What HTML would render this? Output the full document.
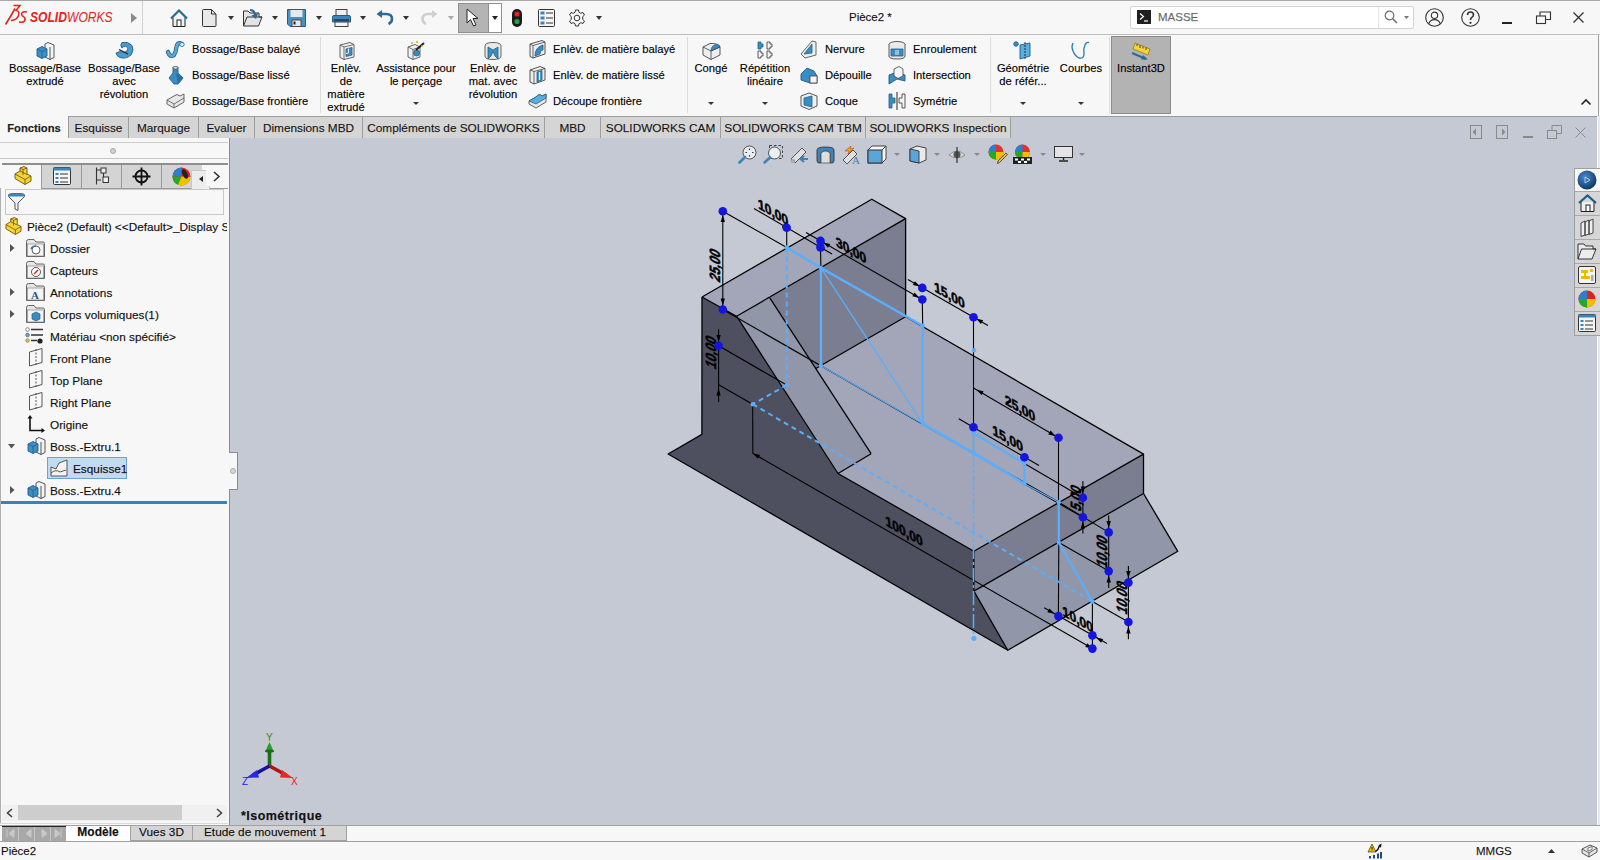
<!DOCTYPE html>
<html><head><meta charset="utf-8">
<style>
*{box-sizing:border-box}
body{margin:0;width:1600px;height:860px;position:relative;overflow:hidden;background:#f7f7f7;font-family:"Liberation Sans",sans-serif;font-size:11.2px;color:#000;-webkit-text-stroke:0.25px rgba(0,0,0,0.5)}
.a{position:absolute}
.t{position:absolute;white-space:nowrap;line-height:13px}
.c{text-align:center}
svg{position:absolute;overflow:visible}
</style></head><body>

<!-- ===== VIEWPORT ===== -->
<div class="a" style="left:230px;top:116px;width:1367px;height:709px;background:#c5c9d3"></div>
<div class="a" style="left:1010px;top:116px;width:587px;height:1px;background:#9a9a9a"></div>

<!-- ===== TITLE BAR ===== -->
<div class="a" style="left:0;top:0;width:1600px;height:35px;background:#f7f7f7;border-top:1px solid #a9a9a9;border-bottom:1px solid #bdbdbd"></div>
<div class="a" style="left:142px;top:1px;width:1px;height:33px;background:#d0d0d0"></div>

<!-- logo -->
<svg style="left:4px;top:4px" width="24" height="22" viewBox="0 0 24 22">
<path d="M9.5 1.5 H16 L12 6.5 Q16 7 14.5 11.5 Q13 16 7 16.5" fill="none" stroke="#e2231a" stroke-width="1.5"/>
<path d="M11 4.5 Q7 12 1.5 20.5" fill="none" stroke="#e2231a" stroke-width="1.6"/>
<path d="M23 8 Q18 7 17.5 10 Q17.5 12 20 13 Q22 14.5 20.5 17 Q19 19 15 18" fill="none" stroke="#e2231a" stroke-width="1.5"/>
</svg>
<div class="t" style="left:30px;top:9px;font-size:13.3px;line-height:16px;color:#e2231a;font-style:italic;transform:scale(0.91,1.08);transform-origin:0 0;-webkit-text-stroke:0"><b>SOLID</b><span style="font-weight:normal">WORKS</span></div>
<svg style="left:131px;top:13px" width="6" height="10"><path d="M0 0 L6 5 L0 10Z" fill="#8a8a8a"/></svg>

<!-- home -->
<svg style="left:170px;top:9px" width="18" height="18" viewBox="0 0 18 18">
<path d="M3 8.5 V17.5 H15 V8.5" fill="#f0f0f0" stroke="#222" stroke-width="1"/>
<path d="M1 9.5 L9 1.5 L17 9.5" fill="none" stroke="#2a6a96" stroke-width="2.2"/>
<rect x="7" y="11" width="4" height="6.5" fill="#fff" stroke="#222" stroke-width="1"/>
</svg>
<!-- new -->
<svg style="left:202px;top:9px" width="15" height="18" viewBox="0 0 15 18">
<path d="M0.5 1.5 Q0.5 0.5 1.5 0.5 H9.5 L14 5 V16.5 Q14 17.5 13 17.5 H1.5 Q0.5 17.5 0.5 16.5Z" fill="#e8e8e8" stroke="#333" stroke-width="1"/>
<path d="M9.5 0.5 V5 H14" fill="none" stroke="#333" stroke-width="1"/>
</svg>
<svg style="left:228px;top:16px" width="6" height="4"><path d="M0 0H6L3 4Z" fill="#333"/></svg>
<!-- open -->
<svg style="left:243px;top:8px" width="20" height="19" viewBox="0 0 20 19">
<path d="M0.5 3 H5 L7 5 H16 V9 H19 L15.5 18 H0.5Z" fill="#e4e4e4" stroke="#333" stroke-width="1"/>
<path d="M0.5 18 L4 9 H19" fill="none" stroke="#333" stroke-width="1"/>
<path d="M7 1 Q12 1 13 6 L15.5 4.5 L13 11 L8.5 7.5 L11 6.5 Q10 3 7 3Z" fill="#2a6a96"/>
</svg>
<svg style="left:272px;top:16px" width="6" height="4"><path d="M0 0H6L3 4Z" fill="#333"/></svg>
<!-- save -->
<svg style="left:287px;top:9px" width="19" height="18" viewBox="0 0 19 18">
<path d="M0.5 0.5 H18.5 V17.5 H3 L0.5 15Z" fill="#4a90c0" stroke="#2a5a80" stroke-width="1"/>
<rect x="3.5" y="1" width="12" height="7" fill="#e8e8e8"/>
<rect x="5" y="11" width="9" height="6.5" fill="#e8e8e8" stroke="#333" stroke-width="0.8"/>
<rect x="6.5" y="12.5" width="2" height="3" fill="#222"/>
</svg>
<svg style="left:316px;top:16px" width="6" height="4"><path d="M0 0H6L3 4Z" fill="#333"/></svg>
<!-- print -->
<svg style="left:332px;top:9px" width="19" height="18" viewBox="0 0 19 18">
<rect x="4" y="0.5" width="11" height="7" fill="#eee" stroke="#444" stroke-width="1"/>
<path d="M0.5 8 Q0.5 6.5 2 6.5 H17 Q18.5 6.5 18.5 8 V13 H0.5Z" fill="#3d85b8" stroke="#245a85" stroke-width="1"/>
<rect x="2" y="10" width="15" height="2" fill="#1d4a6e"/>
<rect x="3" y="13" width="13" height="4.5" fill="#f2f2f2" stroke="#444" stroke-width="1"/>
</svg>
<svg style="left:360px;top:16px" width="6" height="4"><path d="M0 0H6L3 4Z" fill="#333"/></svg>
<!-- undo -->
<svg style="left:376px;top:10px" width="18" height="15" viewBox="0 0 18 15">
<path d="M3 4 H10 Q16 4 16 9 Q16 12.5 12.5 14" fill="none" stroke="#2a6a96" stroke-width="2.6"/>
<path d="M0.5 4 L6 0 V8Z" fill="#2a6a96"/>
</svg>
<svg style="left:403px;top:16px" width="6" height="4"><path d="M0 0H6L3 4Z" fill="#333"/></svg>
<!-- redo -->
<svg style="left:421px;top:10px" width="17" height="15" viewBox="0 0 17 15">
<path d="M14 4 H7 Q1.5 4 1.5 9 Q1.5 12.5 5 14" fill="none" stroke="#cfcfcf" stroke-width="2.6"/>
<path d="M16.5 4 L11 0 V8Z" fill="#cfcfcf"/>
</svg>
<svg style="left:448px;top:16px" width="6" height="4"><path d="M0 0H6L3 4Z" fill="#aaa"/></svg>
<!-- select -->
<div class="a" style="left:458px;top:3px;width:44px;height:30px;background:#fff;border:1px solid #8f8f8f"></div>
<div class="a" style="left:458px;top:3px;width:31px;height:30px;background:#b4b4b4;border:1px solid #8f8f8f"></div>
<svg style="left:466px;top:8px" width="14" height="19" viewBox="0 0 14 19">
<path d="M1 1 V15 L4.5 11.5 L7.5 18 L10 17 L7 10.5 H12Z" fill="#fff" stroke="#222" stroke-width="1"/>
</svg>
<svg style="left:492px;top:16px" width="6" height="4"><path d="M0 0H6L3 4Z" fill="#222"/></svg>
<!-- traffic -->
<svg style="left:512px;top:9px" width="10" height="18" viewBox="0 0 10 18">
<rect x="0" y="0" width="10" height="18" rx="5" fill="#1a1a1a"/>
<circle cx="5" cy="5" r="2.6" fill="#e02020"/><circle cx="5" cy="12.5" r="2.6" fill="#20a040"/>
</svg>
<!-- list -->
<svg style="left:538px;top:9px" width="17" height="18" viewBox="0 0 17 18">
<rect x="0.5" y="0.5" width="16" height="17" rx="1" fill="#f5f5f5" stroke="#333" stroke-width="1"/>
<rect x="2.5" y="2.5" width="4" height="3" fill="#3d85b8"/><rect x="2.5" y="7.5" width="4" height="3" fill="#3d85b8"/><rect x="2.5" y="12.5" width="4" height="3" fill="#3d85b8"/>
<path d="M8 4H15M8 9H15M8 14H15" stroke="#333" stroke-width="1"/>
</svg>
<!-- gear -->
<svg style="left:568px;top:9px" width="18" height="18" viewBox="0 0 18 18">
<path d="M7.5 1 H10.5 L11 3.3 L12.8 4.3 L15 3.5 L16.5 6 L14.7 7.6 V10.4 L16.5 12 L15 14.5 L12.8 13.7 L11 14.7 L10.5 17 H7.5 L7 14.7 L5.2 13.7 L3 14.5 L1.5 12 L3.3 10.4 V7.6 L1.5 6 L3 3.5 L5.2 4.3 L7 3.3Z" fill="none" stroke="#333" stroke-width="1"/>
<circle cx="9" cy="9" r="2.8" fill="none" stroke="#333" stroke-width="1"/>
</svg>
<svg style="left:596px;top:16px" width="6" height="4"><path d="M0 0H6L3 4Z" fill="#333"/></svg>

<!-- search -->
<div class="a" style="left:1130px;top:6px;width:284px;height:23px;background:#fff;border:1px solid #d2d2d2;border-radius:2px"></div>
<div class="a" style="left:1378px;top:7px;width:1px;height:21px;background:#e6e6e6"></div>
<svg style="left:1137px;top:10px" width="14" height="14"><rect width="14" height="14" fill="#202020"/><path d="M3 3.5 L6.5 6.5 L3 9.5" fill="none" stroke="#fff" stroke-width="1.2"/><path d="M7 11 H11" stroke="#fff" stroke-width="1.2"/></svg>
<div class="t" style="left:1158px;top:11px;font-size:11.5px;color:#7a7a7a">MASSE</div>
<svg style="left:1384px;top:10px" width="14" height="14" viewBox="0 0 14 14"><circle cx="5.5" cy="5.5" r="4.3" fill="none" stroke="#6a6a6a" stroke-width="1.2"/><path d="M8.7 8.7 L13 13" stroke="#6a6a6a" stroke-width="1.5"/></svg>
<svg style="left:1404px;top:16px" width="5" height="3"><path d="M0 0H5L2.5 3Z" fill="#777"/></svg>
<!-- user / help -->
<svg style="left:1425px;top:8px" width="19" height="19" viewBox="0 0 19 19"><circle cx="9.5" cy="9.5" r="8.8" fill="none" stroke="#333" stroke-width="1.1"/><circle cx="9.5" cy="7.3" r="3.2" fill="none" stroke="#333" stroke-width="1.1"/><path d="M3.6 16 Q5 11.6 9.5 11.6 Q14 11.6 15.4 16" fill="none" stroke="#333" stroke-width="1.1"/></svg>
<svg style="left:1461px;top:8px" width="19" height="19" viewBox="0 0 19 19"><circle cx="9.5" cy="9.5" r="8.8" fill="none" stroke="#333" stroke-width="1.1"/><path d="M6.5 7 Q6.5 4 9.5 4 Q12.5 4 12.5 6.8 Q12.5 8.5 10.5 9.6 Q9.5 10.3 9.5 12" fill="none" stroke="#333" stroke-width="1.6"/><circle cx="9.5" cy="14.8" r="1.1" fill="#333"/></svg>
<div class="a" style="left:1502px;top:22px;width:10px;height:2px;background:#222"></div>
<svg style="left:1536px;top:11px" width="15" height="13" viewBox="0 0 15 13"><rect x="0.5" y="5" width="9" height="7.5" fill="none" stroke="#333" stroke-width="1.1"/><path d="M4 5 V1 H14.5 V8.5 H9.5" fill="none" stroke="#333" stroke-width="1.1"/></svg>
<svg style="left:1573px;top:12px" width="11" height="11" viewBox="0 0 11 11"><path d="M0.5 0.5 L10.5 10.5 M10.5 0.5 L0.5 10.5" stroke="#333" stroke-width="1.3"/></svg>

<div class="t" style="left:849px;top:11px;font-size:11.5px;color:#111">Pièce2 *</div>

<!-- ===== RIBBON ===== -->
<div class="a" style="left:0;top:35px;width:1599px;height:81px;background:#f7f7f7;border-right:1px solid #a0a0a0"></div>
<div class="a" style="left:320px;top:37px;width:1px;height:76px;background:#dcdcdc"></div>
<div class="a" style="left:687px;top:37px;width:1px;height:76px;background:#dcdcdc"></div>
<div class="a" style="left:990px;top:37px;width:1px;height:76px;background:#dcdcdc"></div>
<div class="a" style="left:1109px;top:37px;width:1px;height:76px;background:#dcdcdc"></div>
<div class="a" style="left:1111px;top:36px;width:60px;height:78px;background:#b3b3b3;border:1px solid #8a8a8a"></div>

<svg style="left:36px;top:42px" width="19" height="18" viewBox="0 0 19 18">
<path d="M9 2 L12 0.5 L18 3 V15.5 L14 17.5 L9 15Z" fill="#f4f4f4" stroke="#444" stroke-width="0.9"/>
<path d="M14 5 V17.5" stroke="#444" stroke-width="0.9"/>
<path d="M1 7 L6 4.5 L11 7 V14 L6 16.5 L1 14Z" fill="#3d8fc4" stroke="#1f5f8a" stroke-width="0.9"/>
<path d="M1 7 L6 9.5 L11 7 M6 9.5 V16.5" fill="none" stroke="#1f5f8a" stroke-width="0.8"/>
</svg><div class="t c" style="left:-15px;width:120px;top:62px">Bossage/Base</div>
<div class="t c" style="left:-15px;width:120px;top:75px">extrudé</div>
<svg style="left:115px;top:41px" width="19" height="19" viewBox="0 0 19 19">
<path d="M7 1.5 Q13 0 17 4.5 Q19.5 9 16 14 Q11 18.5 5 16.5 Q1.5 15 1 12 L5 10.5 Q9 13 12 10 Q14 7 11 5 Q8 5.5 7 7 Q4.5 4 7 1.5Z" fill="#4a9ccf" stroke="#1f5f8a" stroke-width="0.9"/>
<path d="M4 8.5 L13 13" stroke="#222" stroke-width="1.3"/>
</svg><div class="t c" style="left:64px;width:120px;top:62px">Bossage/Base</div>
<div class="t c" style="left:64px;width:120px;top:75px">avec</div>
<div class="t c" style="left:64px;width:120px;top:88px">révolution</div>
<svg style="left:166px;top:40px" width="19" height="19" viewBox="0 0 19 19">
<path d="M2 12 Q4 18 8 15 Q10 12 10.5 7 Q11 3 14 3 L16 4" fill="none" stroke="#1f5f8a" stroke-width="4.2" stroke-linecap="round"/>
<path d="M2 12 Q4 18 8 15 Q10 12 10.5 7 Q11 3 14 3 L16 4" fill="none" stroke="#5aa9d8" stroke-width="2.6" stroke-linecap="round"/>
<ellipse cx="16" cy="4.5" rx="2.2" ry="2" fill="#dff" stroke="#1f5f8a" stroke-width="0.8"/>
</svg><div class="t" style="left:192px;top:43px">Bossage/Base balayé</div>
<svg style="left:168px;top:66px" width="16" height="19" viewBox="0 0 16 19">
<path d="M5 1 H10 V7 L15 12 L10 18 H6 L1 12 L5 7Z" fill="#3a8dc2" stroke="#1f5f8a" stroke-width="0.9"/>
<ellipse cx="7.5" cy="1.8" rx="2.6" ry="1.2" fill="#eee" stroke="#444" stroke-width="0.7"/>
<path d="M8 7 L15 12 L10 18Z" fill="#2a6fa0"/>
</svg><div class="t" style="left:192px;top:69px">Bossage/Base lissé</div>
<svg style="left:166px;top:92px" width="19" height="17" viewBox="0 0 19 17">
<path d="M1 8 L8 4 Q11 1 14 4 L18 2 V10 L8 16 L1 12Z" fill="#e8e8e8" stroke="#555" stroke-width="0.9"/>
<path d="M1 8 L8 12 L18 6 M8 12 V16" fill="none" stroke="#555" stroke-width="0.8"/>
</svg><div class="t" style="left:192px;top:95px">Bossage/Base frontière</div>
<svg style="left:339px;top:42px" width="16" height="18" viewBox="0 0 16 18">
<path d="M1 3 L11 0.5 L15 2.5 V15 L5 17.5 L1 15.5Z" fill="#efefef" stroke="#555" stroke-width="0.9"/>
<path d="M5 5 L15 2.5 M5 5 V17.5 M1 3 L5 5" fill="none" stroke="#555" stroke-width="0.8"/>
<path d="M7 7 L13 5.5 V13 L7 14.5Z" fill="#3a8dc2" stroke="#1f5f8a" stroke-width="0.8"/>
<path d="M9.5 6.5 V11 L7 11.5" fill="none" stroke="#eee" stroke-width="1"/>
</svg><div class="t c" style="left:286px;width:120px;top:62px">Enlèv.</div>
<div class="t c" style="left:286px;width:120px;top:75px">de</div>
<div class="t c" style="left:286px;width:120px;top:88px">matière</div>
<div class="t c" style="left:286px;width:120px;top:101px">extrudé</div>
<svg style="left:407px;top:41px" width="18" height="19" viewBox="0 0 18 19">
<path d="M1 6 L8 3.5 L13 6 V16 L6 18.5 L1 16Z" fill="#efefef" stroke="#555" stroke-width="0.9"/>
<path d="M1 6 L6 8.5 L13 6 M6 8.5 V18.5" fill="none" stroke="#555" stroke-width="0.8"/>
<circle cx="9.5" cy="12" r="3" fill="#3a8dc2" stroke="#1f5f8a" stroke-width="0.8"/>
<path d="M9 9 L17 2" stroke="#222" stroke-width="2"/>
<circle cx="5" cy="2" r="1" fill="#e8a020"/><circle cx="10" cy="1" r="1.2" fill="#f0c020"/><circle cx="15" cy="5" r="0.9" fill="#e8a020"/>
</svg><div class="t c" style="left:356px;width:120px;top:62px">Assistance pour</div>
<div class="t c" style="left:356px;width:120px;top:75px">le perçage</div>
<svg style="left:413px;top:102px" width="6" height="3"><path d="M0 0H6L3 3Z" fill="#333"/></svg>
<svg style="left:484px;top:42px" width="18" height="18" viewBox="0 0 18 18">
<path d="M1 4 Q1 0.5 9 0.5 Q17 0.5 17 4 V14 Q17 17.5 9 17.5 Q1 17.5 1 14Z" fill="#e8e8e8" stroke="#555" stroke-width="0.9"/>
<path d="M4 5 L9 8 L14 5 V17 L11 14 L9 9.5 L7 14 L4 17Z" fill="#3a8dc2" stroke="#1f5f8a" stroke-width="0.8"/>
</svg><div class="t c" style="left:433px;width:120px;top:62px">Enlèv. de</div>
<div class="t c" style="left:433px;width:120px;top:75px">mat. avec</div>
<div class="t c" style="left:433px;width:120px;top:88px">révolution</div>
<svg style="left:529px;top:40px" width="17" height="19" viewBox="0 0 17 19">
<path d="M1 4 L13 0.5 L16 2 V14 L4 18 L1 16.5Z" fill="#eee" stroke="#444" stroke-width="0.9"/>
<path d="M4 5.5 L16 2 M4 5.5 V18 M1 4 L4 5.5" fill="none" stroke="#444" stroke-width="0.8"/>
<path d="M6 16 Q6 7 14 5 V10 Q11 10 11 14Z" fill="#3a8dc2" stroke="#1f5f8a" stroke-width="0.8"/>
</svg><div class="t" style="left:553px;top:43px">Enlèv. de matière balayé</div>
<svg style="left:529px;top:66px" width="17" height="19" viewBox="0 0 17 19">
<path d="M1 4 L11 0.5 L16 2.5 V14 L5 18 L1 16Z" fill="#eee" stroke="#444" stroke-width="0.9"/>
<path d="M5 5.5 L16 2.5 M5 5.5 V18 M1 4 L5 5.5" fill="none" stroke="#444" stroke-width="0.8"/>
<path d="M8 16 V6 L13 4.5 V14Z" fill="#3a8dc2" stroke="#1f5f8a" stroke-width="0.8"/>
<path d="M10.5 6 V14" stroke="#eee" stroke-width="1.2"/>
</svg><div class="t" style="left:553px;top:69px">Enlèv. de matière lissé</div>
<svg style="left:528px;top:92px" width="19" height="17" viewBox="0 0 19 17">
<path d="M1 9 L8 5 Q11 1 14 4 L18 2 V10 L8 16 L1 12Z" fill="#e8e8e8" stroke="#555" stroke-width="0.9"/>
<path d="M1 9 L8 5 Q11 1 14 4 L18 2 L18 6 L8 12 L1 9Z" fill="#5aaee0" stroke="#1f5f8a" stroke-width="0.8"/>
</svg><div class="t" style="left:553px;top:95px">Découpe frontière</div>
<svg style="left:702px;top:42px" width="19" height="18" viewBox="0 0 19 18">
<path d="M1 5 L8 1.5 Q16 1 18 5 V13 L9 17.5 L1 13Z" fill="#eee" stroke="#444" stroke-width="0.9"/>
<path d="M9 9 Q9 3 15 2.5 Q18 3 18 5 L9 9Z" fill="#3a8dc2" stroke="#1f5f8a" stroke-width="0.8"/>
<path d="M1 5 L9 9 V17.5 M9 9 L18 5" fill="none" stroke="#444" stroke-width="0.8"/>
</svg><div class="t c" style="left:651px;width:120px;top:62px">Congé</div>
<svg style="left:708px;top:102px" width="6" height="3"><path d="M0 0H6L3 3Z" fill="#333"/></svg>
<svg style="left:757px;top:41px" width="17" height="18" viewBox="0 0 17 18">
<path d="M1 1 H4 V3 H6 V6 H4 V8 H1Z" fill="#3a8dc2" stroke="#1f5f8a" stroke-width="0.8"/>
<path d="M10 1 H13 V3 H15 V6 H13 V8 H10Z" fill="#f4f4f4" stroke="#333" stroke-width="0.8"/>
<path d="M1 10 H4 V12 H6 V15 H4 V17 H1Z" fill="#f4f4f4" stroke="#333" stroke-width="0.8"/>
<path d="M10 10 H13 V12 H15 V15 H13 V17 H10Z" fill="#f4f4f4" stroke="#333" stroke-width="0.8"/>
</svg><div class="t c" style="left:705px;width:120px;top:62px">Répétition</div>
<div class="t c" style="left:705px;width:120px;top:75px">linéaire</div>
<svg style="left:762px;top:102px" width="6" height="3"><path d="M0 0H6L3 3Z" fill="#333"/></svg>
<svg style="left:800px;top:40px" width="18" height="19" viewBox="0 0 18 19">
<path d="M1 14 L12 1 L16 2 V15 L5 18Z" fill="#eee" stroke="#555" stroke-width="0.9"/>
<path d="M4 14 L12 4 V13 Z" fill="#3a8dc2" stroke="#1f5f8a" stroke-width="0.8"/>
</svg><div class="t" style="left:825px;top:43px">Nervure</div>
<svg style="left:800px;top:66px" width="18" height="18" viewBox="0 0 18 18">
<path d="M1 8 L7 2 L14 5 L17 10 V17 L10 17 L1 14Z" fill="#3a8dc2" stroke="#1f5f8a" stroke-width="0.9"/>
<rect x="10" y="10" width="7" height="7" fill="#f4f4f4" stroke="#444" stroke-width="0.8"/>
</svg><div class="t" style="left:825px;top:69px">Dépouille</div>
<svg style="left:800px;top:92px" width="18" height="18" viewBox="0 0 18 18">
<path d="M1 4 L9 1 L17 4 V14 L9 17.5 L1 14Z" fill="#f0f0f0" stroke="#444" stroke-width="0.9"/>
<path d="M4 6 L12 4 V15 L4 13Z" fill="#3a8dc2" stroke="#1f5f8a" stroke-width="0.8"/>
</svg><div class="t" style="left:825px;top:95px">Coque</div>
<svg style="left:888px;top:41px" width="18" height="19" viewBox="0 0 18 19">
<ellipse cx="9" cy="3.5" rx="8" ry="3" fill="#eee" stroke="#444" stroke-width="0.9"/>
<path d="M1 3.5 V15 Q1 18 9 18 Q17 18 17 15 V3.5" fill="#e8e8e8" stroke="#444" stroke-width="0.9"/>
<path d="M3 8 H15 V15 H3Z" fill="#3a8dc2" stroke="#1f5f8a" stroke-width="0.8"/>
<path d="M8 9 V14 M10 9 V14" stroke="#eee" stroke-width="1"/>
</svg><div class="t" style="left:913px;top:43px">Enroulement</div>
<svg style="left:888px;top:66px" width="18" height="19" viewBox="0 0 18 19">
<path d="M1 9 L9 6 L17 9 V15 L9 13 L1 18Z" fill="#3a8dc2" stroke="#1f5f8a" stroke-width="0.9"/>
<path d="M6 3 L11 0.5 L15 3 V10 L10 12.5 L6 10Z" fill="#f4f4f4" stroke="#444" stroke-width="0.8"/>
</svg><div class="t" style="left:913px;top:69px">Intersection</div>
<svg style="left:888px;top:92px" width="18" height="18" viewBox="0 0 18 18">
<path d="M1 2 H4 V6 H7 V11 H4 V16 H1Z" fill="#3a8dc2" stroke="#1f5f8a" stroke-width="0.8"/>
<path d="M17 2 H14 V6 H11 V11 H14 V16 H17Z" fill="#f4f4f4" stroke="#333" stroke-width="0.8"/>
<path d="M9 0 V18" stroke="#222" stroke-width="1"/>
</svg><div class="t" style="left:913px;top:95px">Symétrie</div>
<svg style="left:1013px;top:41px" width="18" height="19" viewBox="0 0 18 19">
<circle cx="3" cy="3" r="2.3" fill="#3a8dc2" stroke="#1f5f8a" stroke-width="0.8"/>
<path d="M7 4 L17 2 V15 L7 18Z" fill="#5aaee0" stroke="#1f5f8a" stroke-width="0.9"/>
<path d="M12 1 V19" stroke="#222" stroke-width="0.9" stroke-dasharray="2 1"/>
</svg><div class="t c" style="left:963px;width:120px;top:62px">Géométrie</div>
<div class="t c" style="left:963px;width:120px;top:75px">de référ...</div>
<svg style="left:1020px;top:102px" width="6" height="3"><path d="M0 0H6L3 3Z" fill="#333"/></svg>
<svg style="left:1071px;top:41px" width="19" height="19" viewBox="0 0 19 19">
<path d="M2 2 Q0 6 2 10 Q4 15 8 17 Q13 18 13 13 Q12 8 14 4 Q15 1 18 1.5" fill="none" stroke="#2a7ab0" stroke-width="1.3"/>
</svg><div class="t c" style="left:1021px;width:120px;top:62px">Courbes</div>
<svg style="left:1078px;top:102px" width="6" height="3"><path d="M0 0H6L3 3Z" fill="#333"/></svg>
<svg style="left:1131px;top:41px" width="20" height="19" viewBox="0 0 20 19">
<path d="M4 2 L19 8 L17 14 L2 8Z" fill="#f3d43a" stroke="#9a7a10" stroke-width="0.8"/>
<path d="M6 3 V5 M9 4 V7 M12 5.5 V7.5 M15 6.5 V9" stroke="#222" stroke-width="0.8"/>
<path d="M1 12 L15 18" stroke="#2a6a96" stroke-width="2"/>
<path d="M12 14 L17 18.5 L10 18.5Z" fill="#2a6a96"/>
</svg><div class="t c" style="left:1081px;width:120px;top:62px">Instant3D</div>
<svg style="left:1581px;top:99px" width="10" height="6"><path d="M0.5 5.5 L5 1 L9.5 5.5" fill="none" stroke="#222" stroke-width="1.6"/></svg>

<!-- ===== TAB ROW ===== -->
<div class="a" style="left:0px;top:116px;width:69px;height:22px;background:#f7f7f7"></div>
<div class="t c" style="left:0px;width:68px;top:122px;font-weight:bold;font-size:11.2px;color:#222">Fonctions</div>
<div class="a" style="left:68px;top:116px;width:61px;height:22px;background:#d5d5d5;border:1px solid #9d9d9d;border-bottom:none"></div>
<div class="t c" style="left:68px;width:61px;top:122px;font-size:11.8px;color:#1a1a1a">Esquisse</div>
<div class="a" style="left:128px;top:116px;width:71px;height:22px;background:#d5d5d5;border:1px solid #9d9d9d;border-bottom:none"></div>
<div class="t c" style="left:128px;width:71px;top:122px;font-size:11.8px;color:#1a1a1a">Marquage</div>
<div class="a" style="left:198px;top:116px;width:57px;height:22px;background:#d5d5d5;border:1px solid #9d9d9d;border-bottom:none"></div>
<div class="t c" style="left:198px;width:57px;top:122px;font-size:11.8px;color:#1a1a1a">Evaluer</div>
<div class="a" style="left:254px;top:116px;width:109px;height:22px;background:#d5d5d5;border:1px solid #9d9d9d;border-bottom:none"></div>
<div class="t c" style="left:254px;width:109px;top:122px;font-size:11.8px;color:#1a1a1a">Dimensions MBD</div>
<div class="a" style="left:362px;top:116px;width:183px;height:22px;background:#d5d5d5;border:1px solid #9d9d9d;border-bottom:none"></div>
<div class="t c" style="left:362px;width:183px;top:122px;font-size:11.8px;color:#1a1a1a">Compléments de SOLIDWORKS</div>
<div class="a" style="left:544px;top:116px;width:57px;height:22px;background:#d5d5d5;border:1px solid #9d9d9d;border-bottom:none"></div>
<div class="t c" style="left:544px;width:57px;top:122px;font-size:11.8px;color:#1a1a1a">MBD</div>
<div class="a" style="left:600px;top:116px;width:121px;height:22px;background:#d5d5d5;border:1px solid #9d9d9d;border-bottom:none"></div>
<div class="t c" style="left:600px;width:121px;top:122px;font-size:11.8px;color:#1a1a1a">SOLIDWORKS CAM</div>
<div class="a" style="left:720px;top:116px;width:146px;height:22px;background:#d5d5d5;border:1px solid #9d9d9d;border-bottom:none"></div>
<div class="t c" style="left:720px;width:146px;top:122px;font-size:11.8px;color:#1a1a1a">SOLIDWORKS CAM TBM</div>
<div class="a" style="left:865px;top:116px;width:146px;height:22px;background:#d5d5d5;border:1px solid #9d9d9d;border-bottom:none"></div>
<div class="t c" style="left:865px;width:146px;top:122px;font-size:11.8px;color:#1a1a1a">SOLIDWORKS Inspection</div>


<!-- ===== LEFT PANEL ===== -->
<div class="a" style="left:0;top:138px;width:229px;height:687px;background:#f7f7f7"></div>
<div class="a" style="left:229px;top:138px;width:1px;height:687px;background:#8c8c8c"></div>


<div class="a" style="left:0;top:142px;width:228px;height:1px;background:#cdcdcd"></div>
<div class="a" style="left:0;top:158px;width:228px;height:1px;background:#c6c6c6"></div>
<div class="a" style="left:110px;top:148px;width:6px;height:6px;border-radius:3px;background:#d2d2d2;border:1px solid #a8a8a8"></div>
<div class="a" style="left:2px;top:163px;width:226px;height:2px;background:#8e8e8e"></div>
<div class="a" style="left:41px;top:165px;width:161px;height:24px;background:#d4d4d4"></div>
<div class="a" style="left:41px;top:165px;width:1px;height:24px;background:#9a9a9a"></div>
<div class="a" style="left:81px;top:165px;width:1px;height:24px;background:#9a9a9a"></div>
<div class="a" style="left:121px;top:165px;width:1px;height:24px;background:#9a9a9a"></div>
<div class="a" style="left:161px;top:165px;width:1px;height:24px;background:#9a9a9a"></div>
<div class="a" style="left:41px;top:188px;width:187px;height:1px;background:#9a9a9a"></div>
<div class="a" style="left:191px;top:170px;width:19px;height:19px;background:#ececec;border:1px solid #c8c8c8;border-bottom:none"></div>
<div class="a" style="left:206px;top:165px;width:22px;height:21px;background:#f7f7f7"></div>
<svg style="left:199px;top:176px" width="4" height="6"><path d="M4 0V6L0 3Z" fill="#222"/></svg>
<svg style="left:213px;top:171px" width="7" height="11"><path d="M1 1 L6 5.5 L1 10" fill="none" stroke="#333" stroke-width="1.6"/></svg>
<!-- tab icons -->
<svg style="left:14px;top:166px" width="18" height="19" viewBox="0 0 18 19">
<path d="M1 8 L6 5 L6 2 L10 0.5 L13 2 V8 L17 10 V15 L11 18.5 L1 12.5Z" fill="#f5d23a" stroke="#6a5200" stroke-width="0.9"/>
<path d="M1 8 L11 13.5 L17 10 M11 13.5 V18.5 M6 5 L13 8.5 M6 2 L9 3.5 L13 2 M9 3.5 V9" fill="none" stroke="#6a5200" stroke-width="0.8"/>
</svg>
<svg style="left:53px;top:167px" width="18" height="18" viewBox="0 0 18 18">
<rect x="0.5" y="0.5" width="17" height="17" rx="1" fill="#f5f5f5" stroke="#333" stroke-width="1"/><rect x="0.5" y="0.5" width="17" height="3" fill="#3d85b8"/>
<rect x="2.5" y="6" width="3" height="2" fill="#3d85b8"/><rect x="2.5" y="10" width="3" height="2" fill="#3d85b8"/><rect x="2.5" y="14" width="3" height="2" fill="#3d85b8"/>
<path d="M7 7H15M7 11H15M7 15H15" stroke="#333" stroke-width="1"/>
</svg>
<svg style="left:95px;top:167px" width="14" height="18" viewBox="0 0 14 18">
<path d="M1.5 0.5 V17.5 M1.5 3 H6 M1.5 13 H6" stroke="#333" stroke-width="1.1" fill="none"/>
<rect x="6" y="1" width="5" height="5" fill="#eee" stroke="#333" stroke-width="1"/>
<rect x="8" y="10" width="5.5" height="5.5" fill="#eee" stroke="#333" stroke-width="1"/>
<path d="M8.5 6 V10" stroke="#333" stroke-width="1"/>
</svg>
<svg style="left:132px;top:167px" width="19" height="19" viewBox="0 0 19 19">
<circle cx="9.5" cy="9.5" r="6" fill="none" stroke="#111" stroke-width="1.8"/>
<path d="M9.5 0.5 V18.5 M0.5 9.5 H18.5" stroke="#111" stroke-width="1.8"/>
</svg>
<svg style="left:172px;top:167px" width="19" height="19" viewBox="0 0 19 19">
<circle cx="9.5" cy="9.5" r="9" fill="#d22"/>
<path d="M9.5 9.5 L0.5 9.5 A9 9 0 0 1 9.5 0.5Z" fill="#2a7fd0"/>
<path d="M9.5 9.5 L0.5 9.5 A9 9 0 0 0 6 17.8Z" fill="#2a2"/>
<path d="M9.5 9.5 L6 17.8 A9 9 0 0 0 18.5 10Z" fill="#f0c000"/>
<ellipse cx="13" cy="7" rx="2.5" ry="5" fill="#222" transform="rotate(-25 13 7)"/>
</svg>
<!-- filter -->
<div class="a" style="left:5px;top:189px;width:219px;height:26px;border:1px solid #c8c8c8;background:#f7f7f7"></div>
<svg style="left:8px;top:193px" width="17" height="18" viewBox="0 0 17 18">
<path d="M0.5 2 Q0.5 0.5 8.5 0.5 Q16.5 0.5 16.5 2 V3.5 L10 10 V17.5 L7 16 V10 L0.5 3.5Z" fill="#f2f2f2" stroke="#444" stroke-width="0.9"/>
<path d="M0.5 1.5 Q0.5 0.5 8.5 0.5 Q16.5 0.5 16.5 1.5 V3.5 H0.5Z" fill="#3d85b8"/>
</svg>
<svg style="left:5px;top:217px" width="17" height="18" viewBox="0 0 18 19">
<path d="M1 8 L6 5 L6 2 L10 0.5 L13 2 V8 L17 10 V15 L11 18.5 L1 12.5Z" fill="#f5d23a" stroke="#6a5200" stroke-width="0.9"/>
<path d="M1 8 L11 13.5 L17 10 M11 13.5 V18.5 M6 5 L13 8.5 M6 2 L9 3.5 L13 2 M9 3.5 V9" fill="none" stroke="#6a5200" stroke-width="0.8"/></svg>
<div class="t" style="left:27px;top:221px;font-size:11.8px;color:#111;width:200px;overflow:hidden">Pièce2 (Default) &lt;&lt;Default&gt;_Display S</div>
<svg style="left:10px;top:244px" width="5" height="8"><path d="M0 0V8L4.5 4Z" fill="#555"/></svg>
<svg style="left:26px;top:239px" width="19" height="18" viewBox="0 0 19 18">
<path d="M0.5 2.5 Q0.5 0.5 2.5 0.5 H8 L10 3 H17 Q18.5 3 18.5 4.5 V17.5 H0.5Z" fill="#e6e6e6" stroke="#555" stroke-width="0.9"/>
<rect x="1.5" y="5" width="16" height="12" fill="#f4f4f4" stroke="#777" stroke-width="0.6"/><circle cx="10" cy="11" r="4" fill="#fff" stroke="#333" stroke-width="0.8"/><path d="M5 10 Q6 7 10 7" fill="none" stroke="#2a7ab0" stroke-width="1.5"/></svg>
<div class="t" style="left:50px;top:243px;font-size:11.8px;color:#111;">Dossier</div>
<svg style="left:26px;top:261px" width="19" height="18" viewBox="0 0 19 18">
<path d="M0.5 2.5 Q0.5 0.5 2.5 0.5 H8 L10 3 H17 Q18.5 3 18.5 4.5 V17.5 H0.5Z" fill="#e6e6e6" stroke="#555" stroke-width="0.9"/>
<rect x="1.5" y="5" width="16" height="12" fill="#f4f4f4" stroke="#777" stroke-width="0.6"/><circle cx="10" cy="11" r="4.5" fill="#fff" stroke="#333" stroke-width="0.8"/><path d="M8 13 L12 9" stroke="#d22" stroke-width="1.5"/></svg>
<div class="t" style="left:50px;top:265px;font-size:11.8px;color:#111;">Capteurs</div>
<svg style="left:10px;top:288px" width="5" height="8"><path d="M0 0V8L4.5 4Z" fill="#555"/></svg>
<svg style="left:26px;top:283px" width="19" height="18" viewBox="0 0 19 18">
<path d="M0.5 2.5 Q0.5 0.5 2.5 0.5 H8 L10 3 H17 Q18.5 3 18.5 4.5 V17.5 H0.5Z" fill="#e6e6e6" stroke="#555" stroke-width="0.9"/>
<rect x="1.5" y="5" width="16" height="12" fill="#f4f4f4" stroke="#777" stroke-width="0.6"/><text x="5" y="16" font-family="Liberation Serif" font-size="11" font-weight="bold" fill="#2a5a8a">A</text></svg>
<div class="t" style="left:50px;top:287px;font-size:11.8px;color:#111;">Annotations</div>
<svg style="left:10px;top:310px" width="5" height="8"><path d="M0 0V8L4.5 4Z" fill="#555"/></svg>
<svg style="left:26px;top:305px" width="19" height="18" viewBox="0 0 19 18">
<path d="M0.5 2.5 Q0.5 0.5 2.5 0.5 H8 L10 3 H17 Q18.5 3 18.5 4.5 V17.5 H0.5Z" fill="#e6e6e6" stroke="#555" stroke-width="0.9"/>
<rect x="1.5" y="5" width="16" height="12" fill="#f4f4f4" stroke="#777" stroke-width="0.6"/><path d="M6 9 L10 7 L14 9 V14 L10 16 L6 14Z" fill="#3a8dc2" stroke="#1f5f8a" stroke-width="0.7"/></svg>
<div class="t" style="left:50px;top:309px;font-size:11.8px;color:#111;">Corps volumiques(1)</div>
<svg style="left:25px;top:327px" width="20" height="18" viewBox="0 0 20 18"><circle cx="2.5" cy="2.5" r="1.8" fill="#fff" stroke="#555" stroke-width="0.7"/><circle cx="2.5" cy="8" r="1.8" fill="#6aa8e0" stroke="#555" stroke-width="0.7"/><circle cx="2.5" cy="13.5" r="1.8" fill="#f0c020" stroke="#777" stroke-width="0.7"/><path d="M6 2.5H18M6 8H18M6 13.5H12" stroke="#333" stroke-width="1.3"/><circle cx="15" cy="14" r="2.6" fill="#222"/></svg>
<div class="t" style="left:50px;top:331px;font-size:11.8px;color:#111;">Matériau &lt;non spécifié&gt;</div>
<svg style="left:29px;top:348px" width="14" height="19" viewBox="0 0 14 19">
<path d="M0.5 4 L13 0.5 V14.5 L0.5 18Z" fill="none" stroke="#444" stroke-width="0.9"/><path d="M7 1 V18" stroke="#444" stroke-width="0.9" stroke-dasharray="2 1.5"/></svg>
<div class="t" style="left:50px;top:353px;font-size:11.8px;color:#111;">Front Plane</div>
<svg style="left:29px;top:370px" width="14" height="19" viewBox="0 0 14 19">
<path d="M0.5 4 L13 0.5 V14.5 L0.5 18Z" fill="none" stroke="#444" stroke-width="0.9"/><path d="M7 1 V18" stroke="#444" stroke-width="0.9" stroke-dasharray="2 1.5"/></svg>
<div class="t" style="left:50px;top:375px;font-size:11.8px;color:#111;">Top Plane</div>
<svg style="left:29px;top:392px" width="14" height="19" viewBox="0 0 14 19">
<path d="M0.5 4 L13 0.5 V14.5 L0.5 18Z" fill="none" stroke="#444" stroke-width="0.9"/><path d="M7 1 V18" stroke="#444" stroke-width="0.9" stroke-dasharray="2 1.5"/></svg>
<div class="t" style="left:50px;top:397px;font-size:11.8px;color:#111;">Right Plane</div>
<svg style="left:27px;top:415px" width="18" height="18" viewBox="0 0 18 18"><path d="M3 2 V15.5 H16" fill="none" stroke="#111" stroke-width="1.6"/><path d="M0.5 3.5 L3 0 L5.5 3.5Z M14.5 13 L18 15.5 L14.5 18Z" fill="#111"/></svg>
<div class="t" style="left:50px;top:419px;font-size:11.8px;color:#111;">Origine</div>
<svg style="left:8px;top:444px" width="8" height="5"><path d="M0 0H7L3.5 4.5Z" fill="#555"/></svg>
<svg style="left:27px;top:437px" width="19" height="18" viewBox="0 0 19 18">
<path d="M9 2 L12 0.5 L18 3 V15.5 L14 17.5 L9 15Z" fill="#f4f4f4" stroke="#444" stroke-width="0.9"/>
<path d="M14 5 V17.5" stroke="#444" stroke-width="0.9"/>
<path d="M1 7 L6 4.5 L11 7 V14 L6 16.5 L1 14Z" fill="#3d8fc4" stroke="#1f5f8a" stroke-width="0.9"/>
<path d="M1 7 L6 9.5 L11 7 M6 9.5 V16.5" fill="none" stroke="#1f5f8a" stroke-width="0.8"/></svg>
<div class="t" style="left:50px;top:441px;font-size:11.8px;color:#111;">Boss.-Extru.1</div>
<div class="a" style="left:47px;top:457px;width:80px;height:22px;background:#c4daf2;border:1px solid #6ea0d6"></div>
<svg style="left:50px;top:459px" width="18" height="18" viewBox="0 0 18 18"><path d="M1 17 V8 L6 10 L9 4 L17 1 V17Z" fill="#f4f4f4" stroke="#444" stroke-width="0.9"/><path d="M1 14 Q6 10 10 13 L16 11" fill="none" stroke="#444" stroke-width="0.9"/></svg>
<div class="t" style="left:73px;top:463px;font-size:11.8px;color:#111;">Esquisse1</div>
<svg style="left:10px;top:486px" width="5" height="8"><path d="M0 0V8L4.5 4Z" fill="#555"/></svg>
<svg style="left:27px;top:481px" width="19" height="18" viewBox="0 0 19 18">
<path d="M9 2 L12 0.5 L18 3 V15.5 L14 17.5 L9 15Z" fill="#f4f4f4" stroke="#444" stroke-width="0.9"/>
<path d="M14 5 V17.5" stroke="#444" stroke-width="0.9"/>
<path d="M1 7 L6 4.5 L11 7 V14 L6 16.5 L1 14Z" fill="#3d8fc4" stroke="#1f5f8a" stroke-width="0.9"/>
<path d="M1 7 L6 9.5 L11 7 M6 9.5 V16.5" fill="none" stroke="#1f5f8a" stroke-width="0.8"/></svg>
<div class="t" style="left:50px;top:485px;font-size:11.8px;color:#111;">Boss.-Extru.4</div>
<div class="a" style="left:1px;top:501px;width:226px;height:3px;background:#2f86c6"></div>
<div class="a" style="left:0;top:188px;width:1px;height:636px;background:#b0b0b0"></div>
<div class="a" style="left:229px;top:452px;width:9px;height:38px;background:#f7f7f7;border:1px solid #8c8c8c;border-left:none"></div>
<div class="a" style="left:230px;top:468px;width:6px;height:6px;border-radius:3px;background:#d8d8d8;border:1px solid #aaa"></div>
<div class="a" style="left:2px;top:805px;width:225px;height:16px;background:#f0f0f0"></div>
<div class="a" style="left:18px;top:805px;width:164px;height:15px;background:#cdcdcd"></div>
<svg style="left:6px;top:808px" width="7" height="10"><path d="M6 1 L1.5 5 L6 9" fill="none" stroke="#444" stroke-width="1.6"/></svg>
<svg style="left:216px;top:808px" width="7" height="10"><path d="M1 1 L5.5 5 L1 9" fill="none" stroke="#444" stroke-width="1.6"/></svg>
<div class="a" style="left:0;top:823px;width:228px;height:1px;background:#dadada"></div>

<!-- ===== BOTTOM TABS ===== -->
<div class="a" style="left:0;top:825px;width:1600px;height:17px;background:#f7f7f7;border-top:1px solid #a0a0a0;border-bottom:1px solid #a0a0a0"></div>


<!--MODEL--><svg style="left:0;top:0" width="1600" height="860">
<polygon points="702.0,297.0 736.6,316.2 838.0,473.5 973.9,551.2 973.9,591.1 1007.8,650.2 668.1,454.0 701.9,434.4" fill="#4e5060"/>
<polygon points="702.0,297.0 871.8,199.2 905.6,218.6 736.6,316.2" fill="#a2a6b8"/>
<polygon points="769.8,297.8 905.6,218.6 905.6,316.7 815.8,368.5" fill="#7b7e90"/>
<polygon points="736.6,316.2 769.8,297.8 871.1,453.7 838.0,473.5" fill="#9296a9"/>
<polygon points="815.8,368.5 905.6,316.7 1143.5,454.1 973.9,551.2 838.0,473.5 871.1,453.7" fill="#a2a6b8"/>
<polygon points="973.9,551.2 1143.5,454.1 1143.5,493.5 973.9,591.1" fill="#7b7e90"/>
<polygon points="973.9,591.1 1143.5,493.5 1177.8,551.3 1007.8,650.2" fill="#9296a9"/>
<polyline points="702.0,297.0 871.8,199.2 905.6,218.6 736.6,316.2 702.0,297.0" fill="none" stroke="#000" stroke-width="1.30" stroke-linejoin="round"/>
<polyline points="905.6,218.6 905.6,316.7 815.8,368.5" fill="none" stroke="#000" stroke-width="1.30" stroke-linejoin="round"/>
<line x1="736.6" y1="316.2" x2="838.0" y2="473.5" stroke="#000" stroke-width="1.30" stroke-linecap="butt"/>
<line x1="769.8" y1="297.8" x2="871.1" y2="453.7" stroke="#000" stroke-width="1.30" stroke-linecap="butt"/>
<line x1="871.1" y1="453.7" x2="838.0" y2="473.5" stroke="#000" stroke-width="1.30" stroke-linecap="butt"/>
<polyline points="905.6,316.7 1143.5,454.1 973.9,551.2 838.0,473.5" fill="none" stroke="#000" stroke-width="1.30" stroke-linejoin="round"/>
<polyline points="1143.5,454.1 1143.5,493.5 1177.8,551.3 1007.8,650.2 973.9,591.1 973.9,551.2" fill="none" stroke="#000" stroke-width="1.30" stroke-linejoin="round"/>
<line x1="973.9" y1="591.1" x2="1143.5" y2="493.5" stroke="#000" stroke-width="1.30" stroke-linecap="butt"/>
<polyline points="702.0,297.0 701.9,434.4 668.1,454.0 1007.8,650.2" fill="none" stroke="#000" stroke-width="1.30" stroke-linejoin="round"/>
<line x1="722.8" y1="211.3" x2="786.7" y2="247.4" stroke="#000" stroke-width="1.10" stroke-linecap="butt"/>
<line x1="722.8" y1="309.5" x2="1058.8" y2="502.3" stroke="#000" stroke-width="1.10" stroke-linecap="butt"/>
<line x1="722.8" y1="211.3" x2="722.8" y2="309.5" stroke="#000" stroke-width="1.10" stroke-linecap="butt"/>
<polygon points="722.8,215.0 725.0,222.0 720.6,222.0" fill="#000"/>
<polygon points="722.8,305.5 720.6,298.5 725.0,298.5" fill="#000"/>
<text x="0" y="0" transform="translate(714.5 265.0) matrix(0,-0.8,0.95,0.45,0,0)" font-family="Liberation Sans" font-weight="bold" font-size="15.7" text-anchor="middle" dominant-baseline="central" fill="#000" stroke="#000" stroke-width="0.5" letter-spacing="-0.1">25,00</text>
<line x1="754.0" y1="208.5" x2="832.0" y2="254.0" stroke="#000" stroke-width="1.10" stroke-linecap="butt"/>
<polygon points="789.0,229.0 781.8,227.4 784.1,223.6" fill="#000"/>
<polygon points="818.0,246.0 825.2,247.6 822.9,251.4" fill="#000"/>
<line x1="786.7" y1="227.7" x2="786.7" y2="247.4" stroke="#000" stroke-width="1.10" stroke-linecap="butt"/>
<line x1="820.5" y1="247.4" x2="820.9" y2="267.9" stroke="#000" stroke-width="1.10" stroke-linecap="butt"/>
<text x="0" y="0" transform="translate(773.0 212.0) matrix(0.866,0.5,0.08,1,0,0)" font-family="Liberation Sans" font-weight="bold" font-size="14.3" text-anchor="middle" dominant-baseline="central" fill="#000" stroke="#000" stroke-width="0.5" letter-spacing="-0.1">10,00</text>
<line x1="806.0" y1="232.5" x2="922.3" y2="299.5" stroke="#000" stroke-width="1.10" stroke-linecap="butt"/>
<polygon points="823.0,242.4 830.2,244.0 828.0,247.8" fill="#000"/>
<polygon points="919.5,297.9 912.3,296.3 914.5,292.5" fill="#000"/>
<line x1="922.3" y1="299.5" x2="922.7" y2="325.8" stroke="#000" stroke-width="1.10" stroke-linecap="butt"/>
<text x="0" y="0" transform="translate(851.0 250.0) matrix(0.866,0.5,0.08,1,0,0)" font-family="Liberation Sans" font-weight="bold" font-size="14.3" text-anchor="middle" dominant-baseline="central" fill="#000" stroke="#000" stroke-width="0.5" letter-spacing="-0.1">30,00</text>
<line x1="907.9" y1="279.6" x2="987.9" y2="325.6" stroke="#000" stroke-width="1.10" stroke-linecap="butt"/>
<polygon points="920.0,286.6 912.8,285.1 915.0,281.2" fill="#000"/>
<polygon points="976.0,318.6 983.2,320.2 980.9,324.0" fill="#000"/>
<line x1="973.5" y1="317.2" x2="973.5" y2="453.0" stroke="#000" stroke-width="1.10" stroke-linecap="butt"/>
<text x="0" y="0" transform="translate(949.3 295.0) matrix(0.866,0.5,0.08,1,0,0)" font-family="Liberation Sans" font-weight="bold" font-size="14.3" text-anchor="middle" dominant-baseline="central" fill="#000" stroke="#000" stroke-width="0.5" letter-spacing="-0.1">15,00</text>
<line x1="718.6" y1="329.3" x2="718.6" y2="402.1" stroke="#000" stroke-width="1.10" stroke-linecap="butt"/>
<polygon points="718.6,342.0 716.4,335.0 720.8,335.0" fill="#000"/>
<polygon points="718.6,388.5 720.8,395.5 716.4,395.5" fill="#000"/>
<line x1="718.6" y1="345.8" x2="786.7" y2="385.1" stroke="#000" stroke-width="1.10" stroke-linecap="butt"/>
<line x1="718.6" y1="384.7" x2="752.7" y2="404.2" stroke="#000" stroke-width="1.10" stroke-linecap="butt"/>
<text x="0" y="0" transform="translate(711.0 352.0) matrix(0,-0.8,0.95,0.45,0,0)" font-family="Liberation Sans" font-weight="bold" font-size="15.7" text-anchor="middle" dominant-baseline="central" fill="#000" stroke="#000" stroke-width="0.5" letter-spacing="-0.1">10,00</text>
<line x1="752.7" y1="404.2" x2="752.8" y2="453.3" stroke="#000" stroke-width="1.10" stroke-linecap="butt"/>
<line x1="752.8" y1="453.3" x2="1092.4" y2="648.6" stroke="#000" stroke-width="1.10" stroke-linecap="butt"/>
<polygon points="752.8,453.3 760.0,454.9 757.8,458.7" fill="#000"/>
<polygon points="1092.4,648.6 1085.2,647.0 1087.4,643.2" fill="#000"/>
<text x="0" y="0" transform="translate(904.0 531.0) matrix(0.866,0.5,0.08,1,0,0)" font-family="Liberation Sans" font-weight="bold" font-size="14.3" text-anchor="middle" dominant-baseline="central" fill="#000" stroke="#000" stroke-width="0.5" letter-spacing="-0.1">100,00</text>
<line x1="973.5" y1="388.0" x2="1058.5" y2="437.7" stroke="#000" stroke-width="1.10" stroke-linecap="butt"/>
<polygon points="1055.5,436.0 1048.3,434.4 1050.6,430.6" fill="#000"/>
<polygon points="976.5,389.7 983.7,391.3 981.5,395.1" fill="#000"/>
<line x1="1058.5" y1="437.7" x2="1058.5" y2="503.0" stroke="#000" stroke-width="1.10" stroke-linecap="butt"/>
<text x="0" y="0" transform="translate(1020.0 408.0) matrix(0.866,0.5,0.08,1,0,0)" font-family="Liberation Sans" font-weight="bold" font-size="14.3" text-anchor="middle" dominant-baseline="central" fill="#000" stroke="#000" stroke-width="0.5" letter-spacing="-0.1">25,00</text>
<line x1="958.8" y1="418.8" x2="1039.0" y2="465.5" stroke="#000" stroke-width="1.10" stroke-linecap="butt"/>
<polygon points="976.5,429.0 969.3,427.4 971.5,423.6" fill="#000"/>
<polygon points="1021.4,455.4 1028.6,457.0 1026.3,460.8" fill="#000"/>
<line x1="1024.4" y1="457.2" x2="1024.4" y2="463.5" stroke="#000" stroke-width="1.10" stroke-linecap="butt"/>
<text x="0" y="0" transform="translate(1007.6 438.4) matrix(0.866,0.5,0.08,1,0,0)" font-family="Liberation Sans" font-weight="bold" font-size="14.3" text-anchor="middle" dominant-baseline="central" fill="#000" stroke="#000" stroke-width="0.5" letter-spacing="-0.1">15,00</text>
<line x1="1082.9" y1="481.0" x2="1082.9" y2="533.4" stroke="#000" stroke-width="1.10" stroke-linecap="butt"/>
<polygon points="1082.9,493.5 1080.7,486.5 1085.1,486.5" fill="#000"/>
<polygon points="1082.9,521.5 1085.1,528.5 1080.7,528.5" fill="#000"/>
<line x1="1024.4" y1="463.5" x2="1082.9" y2="497.8" stroke="#000" stroke-width="1.10" stroke-linecap="butt"/>
<line x1="1024.4" y1="483.7" x2="1082.9" y2="517.3" stroke="#000" stroke-width="1.10" stroke-linecap="butt"/>
<text x="0" y="0" transform="translate(1075.6 497.8) matrix(0,-0.8,0.95,0.45,0,0)" font-family="Liberation Sans" font-weight="bold" font-size="15.7" text-anchor="middle" dominant-baseline="central" fill="#000" stroke="#000" stroke-width="0.5" letter-spacing="-0.1">5,00</text>
<line x1="1108.7" y1="515.6" x2="1108.7" y2="587.9" stroke="#000" stroke-width="1.10" stroke-linecap="butt"/>
<polygon points="1108.7,528.0 1106.5,521.0 1110.9,521.0" fill="#000"/>
<polygon points="1108.7,575.5 1110.9,582.5 1106.5,582.5" fill="#000"/>
<line x1="1058.8" y1="502.3" x2="1108.7" y2="532.4" stroke="#000" stroke-width="1.10" stroke-linecap="butt"/>
<line x1="1058.8" y1="542.4" x2="1108.7" y2="571.1" stroke="#000" stroke-width="1.10" stroke-linecap="butt"/>
<text x="0" y="0" transform="translate(1101.8 551.2) matrix(0,-0.8,0.95,0.45,0,0)" font-family="Liberation Sans" font-weight="bold" font-size="15.7" text-anchor="middle" dominant-baseline="central" fill="#000" stroke="#000" stroke-width="0.5" letter-spacing="-0.1">10,00</text>
<line x1="1128.4" y1="565.9" x2="1128.4" y2="639.2" stroke="#000" stroke-width="1.10" stroke-linecap="butt"/>
<polygon points="1128.4,578.0 1126.2,571.0 1130.6,571.0" fill="#000"/>
<polygon points="1128.4,626.5 1130.6,633.5 1126.2,633.5" fill="#000"/>
<line x1="1092.4" y1="601.5" x2="1128.4" y2="622.0" stroke="#000" stroke-width="1.10" stroke-linecap="butt"/>
<text x="0" y="0" transform="translate(1121.7 597.3) matrix(0,-0.8,0.95,0.45,0,0)" font-family="Liberation Sans" font-weight="bold" font-size="15.7" text-anchor="middle" dominant-baseline="central" fill="#000" stroke="#000" stroke-width="0.5" letter-spacing="-0.1">10,00</text>
<line x1="1058.8" y1="542.4" x2="1058.4" y2="616.1" stroke="#000" stroke-width="1.10" stroke-linecap="butt"/>
<line x1="1092.4" y1="601.5" x2="1092.4" y2="648.6" stroke="#000" stroke-width="1.10" stroke-linecap="butt"/>
<line x1="1044.2" y1="607.7" x2="1107.0" y2="643.4" stroke="#000" stroke-width="1.10" stroke-linecap="butt"/>
<polygon points="1054.5,613.8 1047.3,612.2 1049.5,608.4" fill="#000"/>
<polygon points="1096.0,637.5 1103.2,638.9 1101.1,642.8" fill="#000"/>
<text x="0" y="0" transform="translate(1077.7 619.3) matrix(0.866,0.5,0.08,1,0,0)" font-family="Liberation Sans" font-weight="bold" font-size="14.3" text-anchor="middle" dominant-baseline="central" fill="#000" stroke="#000" stroke-width="0.5" letter-spacing="-0.1">10,00</text>
<polyline points="786.7,247.4 820.9,267.9 922.7,325.8" fill="none" stroke="#5aaefc" stroke-width="2.40" stroke-linejoin="round"/>
<line x1="820.9" y1="267.9" x2="820.9" y2="365.8" stroke="#5aaefc" stroke-width="2.20" stroke-linecap="butt"/>
<line x1="922.7" y1="325.8" x2="922.7" y2="423.7" stroke="#5aaefc" stroke-width="2.20" stroke-linecap="butt"/>
<line x1="820.9" y1="267.9" x2="922.7" y2="423.7" stroke="#5aaefc" stroke-width="1.30" stroke-linecap="butt"/>
<line x1="820.9" y1="365.8" x2="922.7" y2="423.7" stroke="#5aaefc" stroke-width="1.30" stroke-linecap="butt"/>
<polyline points="922.7,423.7 973.5,453.0 1024.4,483.7" fill="none" stroke="#5aaefc" stroke-width="2.60" stroke-linejoin="round"/>
<polyline points="973.5,433.0 1024.4,463.5 1024.4,483.7" fill="none" stroke="#5aaefc" stroke-width="2.20" stroke-linejoin="round"/>
<line x1="973.5" y1="433.0" x2="973.5" y2="453.0" stroke="#5aaefc" stroke-width="1.60" stroke-linecap="butt"/>
<line x1="1024.4" y1="483.7" x2="1058.8" y2="502.3" stroke="#5aaefc" stroke-width="1.30" stroke-linecap="butt"/>
<line x1="1058.8" y1="502.3" x2="1058.8" y2="542.4" stroke="#5aaefc" stroke-width="2.20" stroke-linecap="butt"/>
<line x1="1058.8" y1="542.4" x2="1092.4" y2="601.5" stroke="#5aaefc" stroke-width="2.20" stroke-linecap="butt"/>
<line x1="786.7" y1="247.4" x2="786.7" y2="385.1" stroke="#5aaefc" stroke-width="2.00" stroke-dasharray="5 4" stroke-linecap="butt"/>
<line x1="786.7" y1="385.1" x2="752.7" y2="404.2" stroke="#5aaefc" stroke-width="2.00" stroke-dasharray="5 4" stroke-linecap="butt"/>
<line x1="752.7" y1="404.2" x2="1092.4" y2="601.5" stroke="#5aaefc" stroke-width="2.00" stroke-dasharray="5 4" stroke-linecap="butt"/>
<line x1="973.5" y1="453.0" x2="973.5" y2="638.3" stroke="#5aaefc" stroke-width="1.50" stroke-dasharray="14 3 3 3" stroke-linecap="butt"/>
<circle cx="973.9" cy="638.3" r="2.6" fill="#5aaefc"/>
<circle cx="786.7" cy="247.4" r="2.2" fill="#5aaefc"/>
<circle cx="820.9" cy="267.9" r="2.2" fill="#5aaefc"/>
<circle cx="922.7" cy="325.8" r="2.2" fill="#5aaefc"/>
<circle cx="922.7" cy="423.7" r="2.2" fill="#5aaefc"/>
<circle cx="973.5" cy="453.0" r="2.2" fill="#5aaefc"/>
<circle cx="1024.4" cy="483.7" r="2.2" fill="#5aaefc"/>
<circle cx="1058.8" cy="502.3" r="2.2" fill="#5aaefc"/>
<circle cx="1058.8" cy="542.4" r="2.2" fill="#5aaefc"/>
<circle cx="1092.4" cy="601.5" r="2.2" fill="#5aaefc"/>
<circle cx="786.7" cy="385.1" r="2.2" fill="#5aaefc"/>
<circle cx="752.7" cy="404.2" r="2.2" fill="#5aaefc"/>
<circle cx="820.9" cy="365.8" r="2.2" fill="#5aaefc"/>
<circle cx="973.5" cy="433.0" r="2.2" fill="#5aaefc"/>
<circle cx="1024.4" cy="463.5" r="2.2" fill="#5aaefc"/>
<circle cx="974.0" cy="350.2" r="2.2" fill="#5aaefc"/>
<circle cx="722.8" cy="211.3" r="4.3" fill="#1515e0"/>
<circle cx="722.8" cy="309.5" r="4.3" fill="#1515e0"/>
<circle cx="786.7" cy="227.7" r="4.3" fill="#1515e0"/>
<circle cx="820.5" cy="247.4" r="4.3" fill="#1515e0"/>
<circle cx="820.5" cy="240.9" r="4.3" fill="#1515e0"/>
<circle cx="922.3" cy="299.5" r="4.3" fill="#1515e0"/>
<circle cx="922.3" cy="287.9" r="4.3" fill="#1515e0"/>
<circle cx="973.5" cy="317.2" r="4.3" fill="#1515e0"/>
<circle cx="718.6" cy="345.8" r="4.3" fill="#1515e0"/>
<circle cx="1058.5" cy="437.7" r="4.3" fill="#1515e0"/>
<circle cx="973.5" cy="427.2" r="4.3" fill="#1515e0"/>
<circle cx="1024.4" cy="457.2" r="4.3" fill="#1515e0"/>
<circle cx="1082.9" cy="497.8" r="4.3" fill="#1515e0"/>
<circle cx="1082.9" cy="517.3" r="4.3" fill="#1515e0"/>
<circle cx="1108.7" cy="532.4" r="4.3" fill="#1515e0"/>
<circle cx="1108.7" cy="571.1" r="4.3" fill="#1515e0"/>
<circle cx="1128.4" cy="582.6" r="4.3" fill="#1515e0"/>
<circle cx="1128.4" cy="622.0" r="4.3" fill="#1515e0"/>
<circle cx="1058.4" cy="616.1" r="4.3" fill="#1515e0"/>
<circle cx="1092.4" cy="635.4" r="4.3" fill="#1515e0"/>
<circle cx="1092.4" cy="648.6" r="4.3" fill="#1515e0"/>
</svg><!--/MODEL-->
<!-- window controls in viewport -->
<svg style="left:1470px;top:125px" width="12" height="14"><rect x="0.5" y="0.5" width="11" height="13" fill="none" stroke="#8a8a8a" stroke-width="1"/><path d="M6 3.5 V10.5 L2.5 7Z" fill="#8a8a8a"/></svg>
<svg style="left:1496px;top:125px" width="12" height="14"><rect x="0.5" y="0.5" width="11" height="13" fill="none" stroke="#8a8a8a" stroke-width="1"/><path d="M6 3.5 V10.5 L9.5 7Z" fill="#8a8a8a"/></svg>
<div class="a" style="left:1523px;top:136px;width:10px;height:2px;background:#8a8a8a"></div>
<svg style="left:1547px;top:125px" width="15" height="14"><rect x="0.5" y="5.5" width="9" height="8" fill="none" stroke="#8a8a8a" stroke-width="1"/><path d="M5 5.5 V0.5 H14.5 V8.5 H9.5" fill="none" stroke="#8a8a8a" stroke-width="1"/></svg>
<svg style="left:1575px;top:127px" width="11" height="11"><path d="M0.5 0.5 L10.5 10.5 M10.5 0.5 L0.5 10.5" stroke="#8a8a8a" stroke-width="1"/></svg>
<div class="a" style="left:1598px;top:116px;width:2px;height:709px;background:#e8e8e8"></div>

<!-- task pane -->
<div class="a" style="left:1574px;top:168px;width:26px;height:168px;background:#d6d6d6;border:1px solid #9e9e9e;border-right:none"></div>
<div class="a" style="left:1575px;top:169px;width:25px;height:22px;background:#f7f7f7"></div>
<div class="a" style="left:1575px;top:191px;width:25px;height:1px;background:#a8a8a8"></div>
<div class="a" style="left:1575px;top:215px;width:25px;height:1px;background:#a8a8a8"></div>
<div class="a" style="left:1575px;top:239px;width:25px;height:1px;background:#a8a8a8"></div>
<div class="a" style="left:1575px;top:263px;width:25px;height:1px;background:#a8a8a8"></div>
<div class="a" style="left:1575px;top:287px;width:25px;height:1px;background:#a8a8a8"></div>
<div class="a" style="left:1575px;top:311px;width:25px;height:1px;background:#a8a8a8"></div>
<svg style="left:1577px;top:170px" width="20" height="20"><defs><radialGradient id="gg" cx="40%" cy="35%" r="65%"><stop offset="0" stop-color="#4a8ad0"/><stop offset="1" stop-color="#0d3a66"/></radialGradient></defs><circle cx="10" cy="10" r="9.5" fill="url(#gg)"/><path d="M8 7 L13 10 L8 13Z" fill="none" stroke="#cde" stroke-width="0.8"/></svg>
<svg style="left:1578px;top:194px" width="19" height="18" viewBox="0 0 19 18"><path d="M3 8 V17.5 H16 V8" fill="#f0f0f0" stroke="#222" stroke-width="1"/><path d="M1 9 L9.5 1.5 L18 9" fill="none" stroke="#1d5a85" stroke-width="2.2"/><rect x="8" y="11" width="4" height="6.5" fill="#fff" stroke="#222" stroke-width="1"/></svg>
<svg style="left:1580px;top:218px" width="16" height="19" viewBox="0 0 16 19"><path d="M1 5 L5 3 V17 L1 18.5Z M5 4 L9 2 V16 L5 17.5Z M9 3 L13 1 V15 L9 16.5Z" fill="#eee" stroke="#333" stroke-width="0.9"/></svg>
<svg style="left:1577px;top:243px" width="20" height="17" viewBox="0 0 20 17"><path d="M1 1 H7 L8.5 3 H16 V6 H19 L15 16 H1Z" fill="#ececec" stroke="#333" stroke-width="1"/><path d="M1 16 L4.5 6 H19" fill="none" stroke="#333" stroke-width="1"/></svg>
<svg style="left:1578px;top:266px" width="18" height="18" viewBox="0 0 18 18"><rect x="0.5" y="0.5" width="17" height="17" rx="1.5" fill="#f4f4f4" stroke="#333" stroke-width="1"/><path d="M3 4 H10 V7 H8 V10 H12 V13 H3 V10 H6 V7 H3Z" fill="#f0b800"/><rect x="12" y="3" width="3" height="3" fill="#f0b800"/><rect x="13" y="9" width="2.5" height="6" fill="#aaa"/></svg>
<svg style="left:1578px;top:290px" width="18" height="18"><circle cx="9" cy="9" r="8.5" fill="#d22"/><path d="M9 9 L0.5 9 A8.5 8.5 0 0 1 9 0.5Z" fill="#2a7fd0"/><path d="M9 9 L0.5 9 A8.5 8.5 0 0 0 9 17.5Z" fill="#2a2"/><path d="M9 9 L9 17.5 A8.5 8.5 0 0 0 17.5 9Z" fill="#f0c000"/></svg>
<svg style="left:1578px;top:314px" width="18" height="18" viewBox="0 0 18 18"><rect x="0.5" y="0.5" width="17" height="17" rx="1" fill="#f5f5f5" stroke="#333" stroke-width="1"/><rect x="0.5" y="0.5" width="17" height="3" fill="#3d85b8"/><rect x="2.5" y="6" width="3" height="2" fill="#3d85b8"/><rect x="2.5" y="10" width="3" height="2" fill="#3d85b8"/><rect x="2.5" y="14" width="3" height="2" fill="#3d85b8"/><path d="M7 7H15M7 11H15M7 15H15" stroke="#333" stroke-width="1"/></svg>

<!-- heads-up toolbar -->
<svg style="left:738px;top:145px" width="19" height="19" viewBox="0 0 19 19"><circle cx="11.5" cy="7.5" r="6.5" fill="#e8eef2" stroke="#555" stroke-width="1"/><path d="M11.5 3.5 V5 M11.5 10 V11.5 M7.5 7.5 H9 M14 7.5 H15.5" stroke="#333" stroke-width="1.2"/><path d="M7 12 L1.5 17.5" stroke="#3d85b8" stroke-width="2.6" stroke-linecap="round"/></svg>
<svg style="left:763px;top:145px" width="20" height="19" viewBox="0 0 20 19"><rect x="6.5" y="0.5" width="13" height="13" fill="none" stroke="#444" stroke-width="1" stroke-dasharray="2.5 2"/><circle cx="11.5" cy="8" r="6" fill="#e8eef2" stroke="#555" stroke-width="1"/><path d="M7 12.5 L1.5 17.5" stroke="#3d85b8" stroke-width="2.6" stroke-linecap="round"/></svg>
<svg style="left:790px;top:146px" width="19" height="18" viewBox="0 0 19 18"><path d="M1 13 L12 2 L16 6 L5 17Z" fill="#e0e0e0" stroke="#555" stroke-width="1"/><ellipse cx="3" cy="15" rx="2.5" ry="2" fill="#aaa"/><path d="M18 13 H11 M14 10 L10.5 13 L14 16" fill="none" stroke="#3d85b8" stroke-width="2.2"/></svg>
<svg style="left:816px;top:146px" width="19" height="18" viewBox="0 0 19 18"><path d="M1 4 Q1 1 9.5 1 Q18 1 18 4 V15 Q18 17.5 14 17 V7 Q12 5 9.5 5 Q7 5 5 7 V17 Q1 17.5 1 15Z" fill="#3d85b8" stroke="#333" stroke-width="0.9"/><path d="M5 7 Q7 5 9.5 5 Q12 5 14 7 V17 H5Z" fill="#ddd" stroke="#555" stroke-width="0.8"/></svg>
<svg style="left:841px;top:145px" width="20" height="19" viewBox="0 0 20 19"><path d="M2 15 L12 5 L16 9 L6 19Z" fill="#e0e0e0" stroke="#555" stroke-width="1"/><path d="M4 6 L10 1 L9 4 L13 3 L7 9 L8 6Z" fill="#f0a020" stroke="#c05010" stroke-width="0.6"/><text x="11" y="19" font-family="Liberation Serif" font-size="11" fill="#3d85b8">A</text></svg>
<svg style="left:867px;top:145px" width="20" height="19" viewBox="0 0 20 19"><path d="M1 5 L5 1 H19 V14 L15 18 H1Z" fill="#f4f4f4" stroke="#444" stroke-width="1"/><rect x="1" y="5" width="14" height="13" fill="#5aa6d8" stroke="#333" stroke-width="1"/><path d="M15 5 L19 1" stroke="#444" stroke-width="1"/></svg>
<svg style="left:894px;top:153px" width="6" height="3"><path d="M0 0H6L3 3Z" fill="#888"/></svg>
<svg style="left:909px;top:145px" width="18" height="19" viewBox="0 0 18 19"><path d="M1 4 L8 1 L17 3 V15 L10 18 L1 16Z" fill="#eaeaea" stroke="#444" stroke-width="1"/><path d="M1 4 L10 6 V18 L1 16Z" fill="#5aa6d8" stroke="#333" stroke-width="0.9"/></svg>
<svg style="left:934px;top:153px" width="6" height="3"><path d="M0 0H6L3 3Z" fill="#888"/></svg>
<svg style="left:948px;top:147px" width="18" height="16" viewBox="0 0 18 16"><path d="M1 8 Q9 0 17 8 Q9 14 1 8Z" fill="#d8d8d8" stroke="#888" stroke-width="0.9"/><circle cx="9" cy="7.5" r="3.5" fill="#555"/><path d="M9 0 V16" stroke="#333" stroke-width="1.2"/></svg>
<svg style="left:974px;top:153px" width="6" height="3"><path d="M0 0H6L3 3Z" fill="#888"/></svg>
<svg style="left:988px;top:144px" width="20" height="20" viewBox="0 0 20 20"><circle cx="8" cy="8" r="7.5" fill="#d33"/><path d="M8 8 L0.5 8 A7.5 7.5 0 0 1 8 0.5Z" fill="#2a7fd0"/><path d="M8 8 L0.5 8 A7.5 7.5 0 0 0 8 15.5Z" fill="#2a2"/><path d="M8 8 L8 15.5 A7.5 7.5 0 0 0 15.5 8Z" fill="#f0c000"/><path d="M10 17 L18 9 L19.5 10.5 L11.5 18.5 L9.5 19.5Z" fill="#f0c040" stroke="#333" stroke-width="0.8"/></svg>
<svg style="left:1013px;top:144px" width="19" height="20" viewBox="0 0 19 20"><circle cx="9.5" cy="8" r="7.5" fill="#d33"/><path d="M9.5 8 L2 8 A7.5 7.5 0 0 1 9.5 0.5Z" fill="#2a7fd0"/><path d="M9.5 8 L2 8 A7.5 7.5 0 0 0 9.5 15.5Z" fill="#2a2"/><path d="M9.5 8 L9.5 15.5 A7.5 7.5 0 0 0 17 8Z" fill="#f0c000"/><rect x="0" y="13" width="19" height="7" fill="#222"/><rect x="2" y="14.5" width="3" height="2" fill="#fff"/><rect x="8" y="14.5" width="3" height="2" fill="#fff"/><rect x="14" y="14.5" width="3" height="2" fill="#fff"/><rect x="5" y="17" width="3" height="2" fill="#fff"/><rect x="11" y="17" width="3" height="2" fill="#fff"/></svg>
<svg style="left:1040px;top:153px" width="6" height="3"><path d="M0 0H6L3 3Z" fill="#888"/></svg>
<svg style="left:1054px;top:146px" width="19" height="16" viewBox="0 0 19 16"><rect x="0.5" y="0.5" width="18" height="11" fill="#e4e4e4" stroke="#333" stroke-width="1"/><path d="M9.5 11.5 V14 M5 15 H14" stroke="#222" stroke-width="1.4"/></svg>
<svg style="left:1079px;top:153px" width="6" height="3"><path d="M0 0H6L3 3Z" fill="#888"/></svg>

<!-- triad -->
<svg style="left:236px;top:730px" width="66" height="60" viewBox="0 0 66 60">
<path d="M33.5 36 V17" stroke="#1a6e1a" stroke-width="3.6"/><path d="M29 22 L33.5 12 L38 22 Z" fill="#2a9a2a"/><ellipse cx="33.5" cy="21" rx="4.5" ry="1.6" fill="#1a6a1a"/>
<path d="M33.5 36 L50 45" stroke="#b01414" stroke-width="3.6"/><path d="M46 40 L57 48 L44 47.5Z" fill="#e02a2a"/>
<path d="M33.5 36 L17 45" stroke="#1414a0" stroke-width="3.6"/><path d="M21 40 L10 48 L23 47.5Z" fill="#2a2ae0"/>
<text x="30" y="11" font-family="Liberation Sans" font-size="10" fill="#1a9a1a">Y</text>
<text x="55" y="55" font-family="Liberation Sans" font-size="10" fill="#ee2020">X</text>
<text x="6" y="55" font-family="Liberation Sans" font-size="10" fill="#2020ee">Z</text>
</svg>
<div class="t" style="left:241px;top:810px;font-size:12.5px;font-weight:bold;color:#111;letter-spacing:0.45px">*Isométrique</div>

<!-- bottom tabs -->
<div class="a" style="left:2px;top:826px;width:64px;height:15px;background:#a8a8a8;border-top:1px solid #222"></div>
<div class="a" style="left:18px;top:827px;width:1px;height:14px;background:#c8c8c8"></div>
<div class="a" style="left:34px;top:827px;width:1px;height:14px;background:#c8c8c8"></div>
<div class="a" style="left:50px;top:827px;width:1px;height:14px;background:#c8c8c8"></div>
<svg style="left:4px;top:829px" width="60" height="9"><path d="M3 0.5 V8.5 M10 0.5 L5 4.5 L10 8.5Z M27 0.5 L22 4.5 L27 8.5Z M38 0.5 L43 4.5 L38 8.5Z M51 0.5 L56 4.5 L51 8.5Z M57 0.5 V8.5" fill="#c8c8c8" stroke="#c8c8c8" stroke-width="1"/></svg>
<div class="a" style="left:66px;top:826px;width:64px;height:15px;background:#fff"></div>
<div class="t c" style="left:66px;width:64px;top:826px;font-size:12px;font-weight:bold;color:#111">Modèle</div>
<div class="a" style="left:130px;top:826px;width:63px;height:15px;background:#d4d4d4;border:1px solid #a0a0a0;border-top:none"></div>
<div class="t c" style="left:130px;width:63px;top:826px;font-size:11.8px;color:#111">Vues 3D</div>
<div class="a" style="left:193px;top:826px;width:154px;height:15px;background:#d4d4d4;border:1px solid #a0a0a0;border-top:none;border-left:none"></div>
<div class="t" style="left:204px;top:826px;font-size:11.8px;color:#111">Etude de mouvement 1</div>

<!-- status icons -->
<svg style="left:1367px;top:843px" width="16" height="16" viewBox="0 0 16 16"><path d="M1 9 L5 1 L9 9Z" fill="#f5c000" stroke="#333" stroke-width="0.7"/><path d="M5 4 V6.5 M5 7.5 V8" stroke="#111" stroke-width="1"/><path d="M8 8 Q11 6 12 2 L10 3 L14.5 0.5 L14 5 L13 3.5 Q12 7 9 9Z" fill="#111"/><rect x="2" y="13" width="2" height="2.5" fill="#1d4a80"/><rect x="6" y="12" width="2" height="3.5" fill="#1d4a80"/><rect x="10" y="10.5" width="2" height="5" fill="#1d4a80"/><rect x="13" y="9" width="2" height="6.5" fill="#1d4a80"/></svg>
<svg style="left:1548px;top:849px" width="7" height="4"><path d="M0 4 L3.5 0 L7 4Z" fill="#333"/></svg>
<svg style="left:1581px;top:844px" width="17" height="14" viewBox="0 0 17 14"><path d="M1 5 L9 1 L16 4 V8 L8 13 L1 9Z" fill="#e8e8e8" stroke="#444" stroke-width="0.9"/><path d="M1 5 L8 9 L16 4 M8 9 V13" fill="none" stroke="#444" stroke-width="0.8"/><path d="M7 4 L11 2.5 V5.5 L7 7Z" fill="#fff" stroke="#444" stroke-width="0.7"/></svg>
<div class="a" style="left:346px;top:841px;width:1254px;height:1px;background:#a0a0a0"></div>

<!-- ===== STATUS BAR ===== -->

<div class="t" style="left:1px;top:845px;font-size:11.5px;color:#111">Pièce2</div>
<div class="t" style="left:1476px;top:845px;font-size:11.5px;color:#222">MMGS</div>

</body></html>
